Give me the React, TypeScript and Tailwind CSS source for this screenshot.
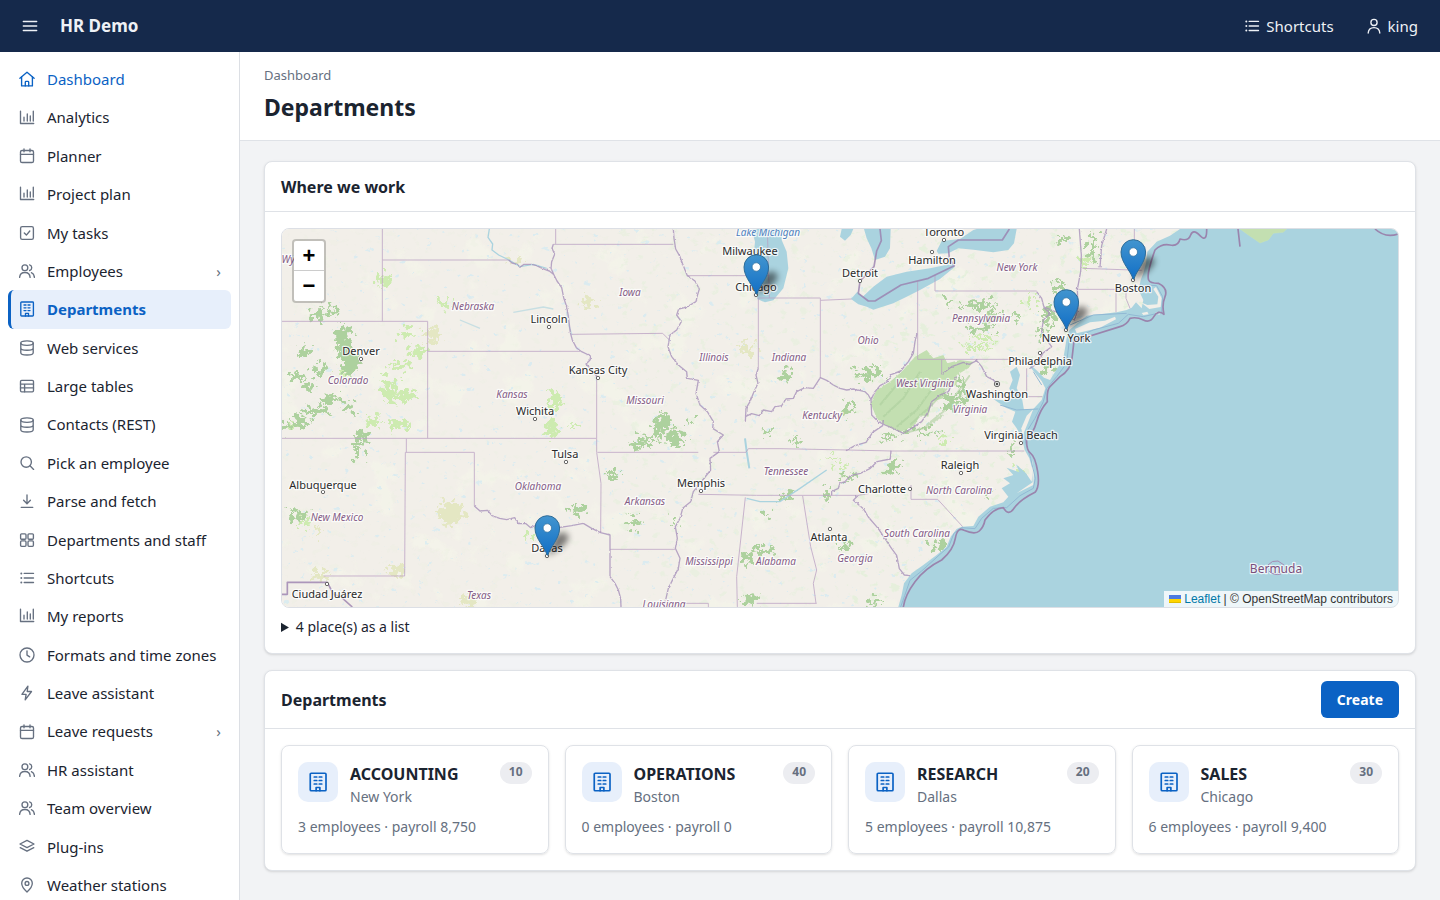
import { useState, type ReactNode } from "react";

/* ---------- icons ---------- */

const glyphs: Record<string, ReactNode> = {
  home: (
    <>
      <path d="M.9 7.3 8 1.2l7.1 6.1" />
      <path d="M2.6 6v8.9h10.8V6" />
      <path d="M6.3 14.9v-3.7c0-.5.3-.8.8-.8h1.8c.5 0 .8.3.8.8v3.7" />
    </>
  ),
  chart: <path d="M1.5 1.2v12.3h13.2M5 7.2v3.9M8.3 4v7.1M11.3 6v5.1M14.3 1.2v9.9" />,
  calendar: (
    <>
      <rect x="1.5" y="2.5" width="13" height="12" rx="1.6" />
      <path d="M1.5 6.3h13M5 1v2.8M11 1v2.8" />
    </>
  ),
  check: (
    <>
      <rect x="1.6" y="1.6" width="12.8" height="12.8" rx="1.6" />
      <path d="m5.3 8 2.1 2.1 3.4-4.1" />
    </>
  ),
  users: (
    <>
      <circle cx="5.9" cy="4.7" r="2.9" />
      <path d="M.6 14.4c.2-3 2.3-4.9 5.3-4.9s5 1.9 5.2 4.9M10.6 1.9a2.9 2.9 0 0 1 0 5.6M12.4 9.7c1.8.8 2.9 2.5 3 4.7" />
    </>
  ),
  building: (
    <>
      <rect x="1.8" y="1" width="12.6" height="14" rx=".8" />
      <path d="M5 4h2M9 4h2M5 6.8h2M9 6.8h2M5 9.6h2M9 9.6h2M6.5 15v-2.6h3V15" />
    </>
  ),
  database: (
    <>
      <ellipse cx="8" cy="3.1" rx="6.2" ry="2.2" />
      <path d="M1.8 3.1v9.6c0 1.3 2.8 2.3 6.2 2.3s6.2-1 6.2-2.3V3.1M1.800 7.900c0 1.300 2.800 2.300 6.200 2.300s6.200-1 6.200-2.300" />
    </>
  ),
  table: (
    <>
      <rect x="1.5" y="2.4" width="13" height="11.4" rx="1.2" />
      <path d="M1.5 6.1h13M1.5 9.9h13M5.6 6.1v7.7" />
    </>
  ),
  search: (
    <>
      <circle cx="7.2" cy="7" r="5.2" />
      <path d="m11 10.8 3.6 3.6" />
    </>
  ),
  download: <path d="M8 2v8.6M4.6 7.3 8 10.7l3.4-3.4M2.2 14.3h11.6" />,
  grid: (
    <>
      <rect x="1.6" y="1.8" width="5.4" height="5.4" rx="1" />
      <rect x="9" y="1.8" width="5.4" height="5.4" rx="1" />
      <rect x="1.6" y="8.9" width="5.4" height="5.4" rx="1" />
      <rect x="9" y="8.9" width="5.4" height="5.4" rx="1" />
    </>
  ),
  list: (
    <>
      <path d="M5.2 3.4h9.3M5.2 8h9.3M5.2 12.5h9.3" />
      <g fill="currentColor" stroke="none">
        <circle cx="2.3" cy="3.4" r="1" />
        <circle cx="2.3" cy="8" r="1" />
        <circle cx="2.3" cy="12.5" r="1" />
      </g>
    </>
  ),
  clock: (
    <>
      <circle cx="8" cy="8" r="7" />
      <path d="M8 3.8v4.3l2.7 1.8" />
    </>
  ),
  bolt: <path d="M8.9 1.2 2.9 9.3h4.2l-.9 5.5 6.3-8.3H8.2z" />,
  layers: (
    <>
      <path d="M8 1.4 15 5 8 8.6 1 5z" />
      <path d="m1.2 8.7 6.8 3.5 6.8-3.5" />
    </>
  ),
  pin: (
    <>
      <path d="M8 15s5.3-4.7 5.3-8.7a5.3 5.3 0 0 0-10.6 0C2.7 10.3 8 15 8 15z" />
      <circle cx="8" cy="6.4" r="1.9" />
    </>
  ),
  user: (
    <>
      <circle cx="8" cy="4.4" r="3.1" />
      <path d="M2.2 15c.2-3.3 2.5-5.4 5.800-5.400s5.600 2.100 5.800 5.400" />
    </>
  ),
  menu: <path d="M1.3 3.5h13.4M1.3 8h13.400M1.300 12.500h13.400" />,
};

function Icon({ name, className = "size-4" }: { name: string; className?: string }) {
  return (
    <svg
      viewBox="0 0 16 16"
      className={"shrink-0 " + className}
      fill="none"
      stroke="currentColor"
      strokeWidth="1.35"
      strokeLinecap="round"
      strokeLinejoin="round"
      aria-hidden="true"
    >
      {glyphs[name]}
    </svg>
  );
}

/* ---------- data ---------- */

const navItems: { label: string; icon: string; more?: boolean }[] = [
  { label: "Dashboard", icon: "home" },
  { label: "Analytics", icon: "chart" },
  { label: "Planner", icon: "calendar" },
  { label: "Project plan", icon: "chart" },
  { label: "My tasks", icon: "check" },
  { label: "Employees", icon: "users", more: true },
  { label: "Departments", icon: "building" },
  { label: "Web services", icon: "database" },
  { label: "Large tables", icon: "table" },
  { label: "Contacts (REST)", icon: "database" },
  { label: "Pick an employee", icon: "search" },
  { label: "Parse and fetch", icon: "download" },
  { label: "Departments and staff", icon: "grid" },
  { label: "Shortcuts", icon: "list" },
  { label: "My reports", icon: "chart" },
  { label: "Formats and time zones", icon: "clock" },
  { label: "Leave assistant", icon: "bolt" },
  { label: "Leave requests", icon: "calendar", more: true },
  { label: "HR assistant", icon: "users" },
  { label: "Team overview", icon: "users" },
  { label: "Plug-ins", icon: "layers" },
  { label: "Weather stations", icon: "pin" },
];

const departments = [
  { no: 10, name: "ACCOUNTING", city: "New York", info: "3 employees · payroll 8,750" },
  { no: 40, name: "OPERATIONS", city: "Boston", info: "0 employees · payroll 0" },
  { no: 20, name: "RESEARCH", city: "Dallas", info: "5 employees · payroll 10,875" },
  { no: 30, name: "SALES", city: "Chicago", info: "6 employees · payroll 9,400" },
];

/* ---------- map ---------- */

type Label = [string, number, number];
type Blob = [number, number, number, number];

const cities: Label[] = [
  ["Lincoln", 549, 323],
  ["Denver", 361, 355],
  ["Kansas City", 598, 374],
  ["Wichita", 535, 415],
  ["Tulsa", 565, 458],
  ["Albuquerque", 323, 489],
  ["Ciudad Juárez", 327, 598],
  ["Dallas", 547, 552],
  ["Milwaukee", 750, 255],
  ["Chicago", 756, 291],
  ["Detroit", 860, 277],
  ["Toronto", 944, 236],
  ["Hamilton", 932, 264],
  ["Memphis", 701, 487],
  ["Charlotte", 882, 493],
  ["Raleigh", 960, 469],
  ["Atlanta", 829, 541],
  ["Washington", 997, 398],
  ["Virginia Beach", 1021, 439],
  ["Philadelphia", 1040, 365],
  ["New York", 1066, 342],
  ["Boston", 1133, 292],
];

const states: Label[] = [
  ["Wy", 288, 263],
  ["Nebraska", 473, 310],
  ["Iowa", 630, 296],
  ["Colorado", 348, 384],
  ["Kansas", 512, 398],
  ["Missouri", 645, 404],
  ["New Mexico", 337, 521],
  ["Oklahoma", 538, 490],
  ["Arkansas", 645, 505],
  ["Texas", 479, 599],
  ["Louisiana", 664, 608],
  ["Illinois", 714, 361],
  ["Indiana", 789, 361],
  ["Ohio", 868, 344],
  ["Kentucky", 822, 419],
  ["Tennessee", 786, 475],
  ["Mississippi", 709, 565],
  ["Alabama", 776, 565],
  ["Georgia", 855, 562],
  ["South Carolina", 917, 537],
  ["North Carolina", 959, 494],
  ["Virginia", 970, 413],
  ["West Virginia", 925, 387],
  ["Pennsylvania", 981, 322],
  ["New York", 1017, 271],
];

const dots: [number, number][] = [
  [549, 327], [361, 359], [598, 378], [535, 419], [566, 462], [323, 492], [327, 584],
  [547, 556], [756, 295], [860, 281], [944, 240], [932, 252], [701, 491], [910, 489],
  [961, 473], [830, 529], [1021, 443], [1040, 353], [1066, 330], [1133, 280],
];

const forests: Blob[] = [
  [330, 310, 5, 5], [317, 316, 8, 4], [343, 340, 8, 16], [350, 362, 9, 12], [305, 352, 8, 4],
  [321, 370, 6, 6], [298, 377, 9, 3], [309, 388, 5, 4], [332, 400, 11, 4], [315, 410, 14, 4],
  [300, 422, 11, 5], [350, 408, 3, 7], [283, 426, 4, 5], [362, 438, 7, 6], [358, 452, 3, 7],
  [300, 515, 9, 5], [578, 509, 8, 5], [613, 475, 6, 3], [634, 522, 7, 4], [664, 420, 8, 6],
  [675, 438, 9, 9], [648, 440, 12, 3], [636, 445, 8, 3], [660, 428, 5, 8], [786, 377, 4, 7],
  [795, 440, 4, 3], [870, 374, 14, 5], [848, 408, 4, 8], [849, 478, 9, 3], [893, 466, 7, 5],
  [827, 494, 3, 4], [787, 498, 7, 5], [763, 513, 4, 3], [762, 550, 12, 4], [748, 558, 5, 7],
  [751, 600, 6, 7], [875, 602, 6, 4], [937, 544, 7, 5], [845, 545, 4, 4], [948, 302, 4, 4],
  [978, 305, 16, 4], [980, 328, 13, 4], [992, 316, 8, 6], [1050, 315, 6, 9], [1042, 332, 4, 7],
  [1058, 287, 8, 5], [1062, 240, 4, 4], [1093, 248, 4, 13], [1048, 367, 6, 6], [962, 390, 4, 16],
  [950, 403, 6, 10], [890, 437, 9, 3], [925, 432, 12, 2], [905, 425, 8, 5], [1011, 449, 2, 5],
  [1015, 320, 2, 5], [676, 519, 3, 3], [988, 496, 3, 2], [767, 432, 4, 2], [690, 423, 3, 3],
];

const meadows: Blob[] = [
  [384, 281, 7, 6], [447, 304, 7, 3], [408, 334, 10, 4], [418, 352, 8, 6], [400, 365, 12, 3],
  [388, 388, 7, 12], [404, 396, 11, 5], [375, 420, 6, 4], [555, 400, 5, 10], [551, 428, 5, 10],
  [400, 425, 12, 5], [345, 372, 8, 4], [303, 523, 7, 3], [372, 424, 6, 2], [533, 536, 4, 4],
  [573, 426, 4, 2], [295, 425, 7, 3], [944, 440, 4, 5], [833, 458, 9, 2], [842, 466, 7, 2],
  [1030, 300, 4, 8], [1085, 262, 5, 6], [975, 347, 14, 2], [985, 338, 14, 2], [1020, 472, 5, 5],
];

const fields: Blob[] = [
  [451, 513, 14, 11], [397, 571, 7, 6], [470, 599, 8, 7], [318, 531, 3, 6], [748, 350, 9, 6],
  [515, 261, 7, 4], [320, 574, 8, 4], [588, 302, 8, 4], [432, 335, 10, 6],
];

const pins: [number, number][] = [
  [756, 295],
  [1133, 280],
  [1066, 330],
  [547, 556],
];

function Blobs({ items, fill }: { items: Blob[]; fill: string }) {
  return (
    <g fill={fill} filter="url(#rough)">
      {items.map(([x, y, rx, ry], i) => (
        <ellipse key={i} cx={x} cy={y} rx={rx} ry={ry} />
      ))}
    </g>
  );
}

function MapDrawing() {
  return (
    <svg
      viewBox="282 229 1116 378"
      preserveAspectRatio="xMidYMid slice"
      className="block size-full"
      role="img"
      aria-label="Map of places"
    >
      <defs>
        <filter id="rough" x="-5%" y="-5%" width="110%" height="110%">
          <feTurbulence type="fractalNoise" baseFrequency="0.17" numOctaves="4" seed="4" />
          <feDisplacementMap in="SourceGraphic" scale="24" xChannelSelector="R" yChannelSelector="G" />
        </filter>
        <filter id="wobble" x="-5%" y="-5%" width="110%" height="110%">
          <feTurbulence type="fractalNoise" baseFrequency="0.13" numOctaves="1" seed="9" />
          <feDisplacementMap in="SourceGraphic" scale="8" xChannelSelector="R" yChannelSelector="G" />
        </filter>
        <filter id="fleckGreen" x="0" y="0" width="100%" height="100%">
          <feTurbulence type="fractalNoise" baseFrequency="0.1 0.13" numOctaves="5" seed="12" />
          <feColorMatrix values="0 0 0 0 .76  0 0 0 0 .87  0 0 0 0 .69  9 0 0 0 -5.6" />
        </filter>
        <filter id="fleckPale" x="0" y="0" width="100%" height="100%">
          <feTurbulence type="fractalNoise" baseFrequency="0.03" numOctaves="5" seed="31" />
          <feColorMatrix values="0 0 0 0 .92  0 0 0 0 .94  0 0 0 0 .82  0 8 0 0 -4.8" />
        </filter>
        <filter id="fleckBlue" x="0" y="0" width="100%" height="100%">
          <feTurbulence type="fractalNoise" baseFrequency="0.12 0.15" numOctaves="4" seed="7" />
          <feColorMatrix values="0 0 0 0 .67  0 0 0 0 .83  0 0 0 0 .89  0 0 14 0 -10.2" />
        </filter>
        <filter id="soft" x="-50%" y="-50%" width="200%" height="200%">
          <feGaussianBlur stdDeviation="3" />
        </filter>
        <linearGradient id="pinFill" x1="0" y1="0" x2="0" y2="1">
          <stop offset="0" stopColor="#4295cf" />
          <stop offset="1" stopColor="#126fc6" />
        </linearGradient>
      </defs>

      <rect x="282" y="229" width="1116" height="378" fill="#f2efe9" />
      <rect x="282" y="229" width="900" height="378" filter="url(#fleckPale)" opacity=".45" />
      <rect x="282" y="229" width="330" height="378" filter="url(#fleckGreen)" opacity=".15" />
      <rect x="612" y="229" width="240" height="378" filter="url(#fleckGreen)" opacity=".45" />
      <rect x="852" y="229" width="330" height="378" filter="url(#fleckGreen)" opacity=".75" />
      <rect x="282" y="229" width="900" height="378" filter="url(#fleckBlue)" opacity=".8" />
      <Blobs items={fields} fill="#e4e7c3" />
      <Blobs items={meadows} fill="#cdebb0" />
      <Blobs items={forests} fill="#add19e" />

      <g transform="translate(280 225) scale(.333333)">
        {/* Appalachian woodland */}
        <g filter="url(#wobble)">
          <path
            transform="translate(1740)"
            fill="#c3dfb1"
            d="M165 395 200 375 220 400 250 390 262 415 300 405 340 410 325 430 290 450 290 480 255 490 250 520 215 530 205 575 180 570 165 600 120 622 75 600 50 580 32 535 50 495 90 470 125 440z"
          />
          <g transform="translate(1740)" fill="none" stroke="#abcf9c" strokeWidth="6" opacity=".6">
            <path d="M70 575 130 520 180 440M110 605 170 555 225 480M60 540 110 480M150 600 215 540 280 470M330 450 280 520 250 560 200 600M130 625 190 610 250 570" />
          </g>
        </g>

        {/* lakes */}
        <g transform="translate(1080)" fill="#aad3df">
          <path d="M335 12 345 50 340 100 350 180 352 222 375 232 400 226 430 190 445 130 440 80 425 45 428 12z" />
          <path d="M605 12 600 35 615 47 632 30 640 12zM672 12 680 40 694 70 705 105 735 95 750 70 752 12z" />
          <path d="M633 222 652 200 668 215 700 185 740 155 800 140 870 130 942 115 944 126 900 162 840 195 800 215 760 235 700 254 680 245 655 238z" />
          <path d="M890 78 905 48 960 42 1000 15 1010 12H1130L1122 55 1105 75 1060 82 1000 74 955 70 925 85 895 86z" />
        </g>

        {/* ocean */}
        <g transform="translate(1740)">
          <path
            fill="#aad3df"
            d="M115 1146 125 1110 132 1075 155 1045 190 1020 230 990 260 965 272 935 290 912 305 905 340 903 355 875 390 845 430 832 445 815 425 790 450 775 430 760 460 750 440 728 478 742 468 718 498 745 515 770 518 735 508 700 494 675 486 640 470 610 456 590 466 560 438 548 400 522 440 528 458 520 448 490 458 465 450 440 470 425 480 450 470 490 486 520 492 555 520 552 545 525 556 490 545 468 510 425 515 422 532 438 552 458 570 465 592 430 610 400 615 370 620 340 628 315 680 272 770 262 800 255 815 248 828 232 845 250 850 225 836 195 842 165 850 145 858 115 862 80 890 50 930 32 960 12H1614V1146z"
          />
          <g fill="#f2efe9">
            <path d="M484 610 500 572 520 552 505 590 488 632z" />
            <path d="M645 312 690 292 735 287 765 275 768 283 720 308 650 325z" />
            <path d="M842 232 862 240 892 238 895 215 880 192 888 186 905 220 902 246 868 252zM845 264 862 260 866 268 850 270zM886 262 900 262 898 270z" />
            <path d="M515 700 522 740 520 780 470 805 518 772z" />
          </g>
          <path
            fill="#c3dfb1"
            stroke="#cdebb0"
            d="M1140 12 1165 30 1200 54 1225 45 1240 25 1270 22 1280 12z"
          />
          <g fill="none" stroke="#92b9d4" strokeWidth="3">
            <path d="M122 1146 134 1112 150 1066 185 1038 240 988 266 966 282 925 305 908 345 911 365 880 400 850 440 848 480 812 520 790 526 760 512 700 496 650 500 620 525 580 550 530 560 490 590 455 620 415 628 345 700 315 775 295 805 268 850 275 905 262 908 215 890 182 855 180" />
            <path d="M520 440 545 480M420 540 470 555 535 552M630 300 700 270 800 265" />
          </g>
          <g fill="none" stroke="#9a84ad" strokeWidth="5" strokeLinejoin="round">
            <path d="M130 1146Q135 1110 165 1070T245 1005Q280 975 286 940T312 916Q345 930 358 918T375 885Q400 850 430 848 445 875 462 850T525 802Q540 785 533 740T512 685 500 640Q520 625 530 590T562 530Q560 495 570 485T600 455Q632 435 636 400T642 348Q700 330 780 305 800 300 810 280 830 275 850 285T882 274 912 268Q905 240 915 215T895 175Q870 175 866 165T868 130 885 75Q905 55 930 60T960 42Q985 50 992 30T1020 32 1040 12" />
            <path d="M1134 12 1140 65M1545 12Q1575 40 1614 27" />
          </g>
        </g>

        {/* rivers */}
        <g fill="none" stroke="#aad3df" strokeWidth="4">
          <path d="M628 12 624 37 638 57 636 75 656 90 681 102 720 125 760 118 800 130" />
          <path d="M700 262 790 246 820 252M540 285 600 310M860 260 866 300 876 330" opacity=".6" />
          <path d="M1395 640 1400 680 1408 730" strokeWidth="6" />
          <path d="M1400 820 1440 830 1500 830 1560 790 1640 735" />
        </g>

        {/* state and country borders */}
        <g fill="none" stroke="#b99fc2" strokeWidth="3" opacity=".75" strokeLinejoin="round">
          <path d="M307 12V289M5 289H443V640M443 379H900M827 12V57M820 58H1180M875 328 1148 325 1166 343M307 105H686" />
          <path d="M5 640H950M379 640V682M376 682H583V843M376 682 374 1053H131M950 640V445M950 640V682L963 775 962 923M952 682H1255M990 973H1185" />
          <path d="M1222 152H1468M1435 219H1621V458M1621 226 1715 222M1435 219V430M1462 12 1468 219" />
          <path d="M1913 170V403H2240M1985 403V448M1965 150V198H2270" />
          <path d="M1300 682H1398L1405 671 1500 671 1700 675 1835 678H2233M1255 808 1430 811H1735L1765 806M1396 817 1370 1055 1372 1146M1568 813 1592 965 1610 1035 1600 1075 1608 1135M1430 1135H1610M1210 1135H1285V1146" />
          <path d="M1893 780V823H1973L2048 905M2240 430V515H2287M2408 130 2585 136M2395 193H2508V262M2508 194H2538V220L2550 250M2563 12V70" />
        </g>
        <g
          filter="url(#wobble)"
          fill="none"
          stroke="#a892bb"
          strokeWidth="4"
          opacity=".8"
          strokeLinejoin="round"
        >
          <path d="M686 105 696 114 712 118 720 127 732 118 755 118 770 122 782 128 796 134 808 138 823 150M820 58 816 70 824 88 815 110 813 130 822 150 831 168 845 188 851 218 860 245 865 273 871 323 877 345 889 368 905 380 932 393 930 405 918 417 938 438 952 457" />
          <path d="M583 843 600 858 623 856 636 872 659 880 680 884 704 878 715 896 738 896 752 908 766 902 790 913 815 912 840 907 875 902 910 895 935 910 962 923 990 930V1055L1005 1075 1015 1095 1022 1120 1023 1146" />
          <path d="M1180 12 1182 40 1187 72 1200 95 1208 117 1222 152 1245 168 1258 192 1252 212 1248 230 1220 246 1196 252 1190 270 1204 290 1190 315 1170 330 1164 365 1175 395 1195 420 1220 440 1222 460 1255 466 1248 505 1260 540 1282 560 1300 590 1298 610 1330 630 1312 650 1318 680 1290 700 1292 735 1268 765 1240 800 1232 830 1208 850 1200 880 1186 905 1192 940 1186 970 1200 1000 1195 1030 1180 1060 1165 1090 1158 1120 1150 1146" />
          <path d="M1435 430 1428 450 1434 475 1420 505 1410 530 1398 550 1396 590M1396 575 1415 566 1438 572 1450 555 1475 560 1485 545 1505 542 1518 522 1540 520 1550 500 1575 488 1600 490 1621 458 1640 466 1660 480 1680 490 1700 495 1720 492 1755 500 1765 510 1773 524 1785 500 1800 482 1822 470 1835 448 1862 438 1885 410 1900 385 1905 350 1911 325" />
          <path d="M1985 448 2015 425 2050 412 2068 418 2090 407 2105 425 2120 455 2140 465 2150 475M1773 524 1775 570 1795 590 1815 600 1840 610 1870 625 1895 610 1925 590 1945 560 1955 530 1980 510 2005 500 2020 470 2030 455" />
          <path d="M1698 677 1725 662 1758 652 1778 622 1808 602 1810 585M1833 677 1831 702 1791 710 1771 730 1741 745 1711 752 1695 770 1680 775 1675 790 1655 800V811M1735 811 1720 826 1750 851 1765 876 1795 911 1815 941 1835 971 1850 991 1858 1031 1873 1050 1890 1052" />
          <path d="M2270 200 2285 220 2293 250 2310 265 2290 285 2285 320 2300 345 2315 365 2290 383 2280 400 2265 420 2250 430M2398 12 2404 90 2402 140 2392 193 2394 250 2384 285 2290 245M2480 12 2465 62 2460 127" />
        </g>
        <g fill="none" stroke="#9a7fae" strokeWidth="5" strokeLinejoin="round" opacity=".8">
          <path d="M5 1108H22V1072H142L160 1107 182 1115 217 1146" />
          <path d="M1800 12 1804 47 1790 78 1782 125 1740 168 1735 205 1765 228H1785L1863 180 1945 160 2023 122 2008 100 2005 65 2035 45H2167L2188 12" />
        </g>
      </g>

      {/* labels */}
      <g fill="#fff" stroke="#444" strokeWidth=".8">
        {dots.map(([x, y], i) => (
          <circle key={i} cx={x} cy={y} r="1.7" />
        ))}
        <circle cx="997" cy="384" r="2.7" />
        <circle cx="997" cy="384" r="1" fill="#333" />
      </g>
      <g
        textAnchor="middle"
        className="font-['Noto_Sans',sans-serif]"
        stroke="#ffffff"
        strokeOpacity=".75"
        strokeWidth="2.5"
        strokeLinejoin="round"
        paintOrder="stroke"
      >
        <g fontSize="10" fontStyle="italic" fill="#845b86">
          {states.map(([name, x, y], i) => (
            <text key={i} x={x} y={y}>
              {name}
            </text>
          ))}
          <text x="768" y="236" fill="#4f80bd">
            Lake Michigan
          </text>
        </g>
        <g fontSize="11" fill="#2a2a2a">
          {cities.map(([name, x, y], i) => (
            <text key={i} x={x} y={y}>
              {name}
            </text>
          ))}
        </g>
        <text x="1276" y="573" fontSize="12" fill="#7a4f7c">
          Bermuda
        </text>
      </g>
      <path d="M1268 565q4-5 10-4l6 4M1269 571q5 5 12 3" fill="none" stroke="#a58bb4" />

      {/* pins */}
      {pins.map(([x, y]) => (
        <g key={x} transform={`translate(${x} ${y})`}>
          <path d="M0 0 8-20Q15-26 20-22T14-8z" fill="#000" opacity=".5" filter="url(#soft)" />
          <path
            d="M0-1C-2-9-12-17-12-28a12.3 12.3 0 0 1 24.6 0C12.6-17 3-9 1-1z"
            fill="url(#pinFill)"
            stroke="#2e6c97"
          />
          <circle cx=".3" cy="-28" r="4.2" fill="#fff" stroke="#2e6c97" strokeWidth=".7" />
        </g>
      ))}
    </svg>
  );
}

function PlacesMap() {
  return (
    <div className="relative h-[380px] overflow-hidden rounded-lg border border-[#dcdfe5]">
      <MapDrawing />
      <div className="absolute top-2.5 left-2.5 flex flex-col rounded-sm border-2 border-black/20 bg-white bg-clip-padding font-['Liberation_Sans',sans-serif] text-[22px] leading-[30px] font-bold text-black">
        <button type="button" aria-label="Zoom in" className="size-[30px] border-b border-[#ccc]">
          +
        </button>
        <button type="button" aria-label="Zoom out" className="size-[30px]">
          −
        </button>
      </div>
      <div className="absolute right-0 bottom-0 flex items-center bg-white/80 px-[5px] font-['Liberation_Sans',sans-serif] text-[12px] leading-4 text-[#333]">
        <a href="#leaflet" className="flex items-center gap-[3px] text-[#0078a8]">
          <svg viewBox="0 0 12 8" className="h-2 w-3" aria-hidden="true">
            <path fill="#4c7be1" d="M0 0h12v4H0z" />
            <path fill="#ffd500" d="M0 4h12v3H0z" />
            <path fill="#e0bc00" d="M0 7h12v1H0z" />
          </svg>
          Leaflet
        </a>
        <span className="whitespace-pre"> | © OpenStreetMap contributors</span>
      </div>
    </div>
  );
}

/* ---------- page ---------- */

function Panel({ title, action, children }: { title: string; action?: ReactNode; children: ReactNode }) {
  return (
    <section className="rounded-lg border border-[#dfe2e7] bg-white shadow-sm">
      <div className="flex min-h-[50px] items-center justify-between border-b border-[#dfe2e7] px-4 py-2.5">
        <h2 className="text-base leading-6 font-bold">{title}</h2>
        {action}
      </div>
      <div className="p-4">{children}</div>
    </section>
  );
}

function PlaceList() {
  const [open, setOpen] = useState(false);
  return (
    <details
      className="mt-2 text-sm leading-[21px]"
      onToggle={(event) => setOpen(event.currentTarget.open)}
    >
      <summary className="cursor-pointer">4 place(s) as a list</summary>
      {open && (
        <ul className="mt-2 pl-4">
          {departments.map((d) => (
            <li key={d.no}>{d.city}</li>
          ))}
        </ul>
      )}
    </details>
  );
}

function Sidebar() {
  return (
    <nav
      aria-label="Main"
      className="w-60 shrink-0 overflow-y-auto border-r border-[#dcdfe4] bg-white p-2 [scrollbar-width:none]"
    >
      <ul>
        {navItems.map((item) => {
          const active = item.label === "Departments";
          const tone = active
            ? "border-[#0b62c4] bg-[#e7effb] font-bold text-[#0b62c4]"
            : item.label === "Dashboard"
              ? "border-transparent text-[#0b62c4]"
              : "border-transparent";
          const iconTone = active || item.label === "Dashboard" ? "size-4" : "size-4 text-[#667080]";
          return (
            <li key={item.label}>
              <a
                href={"#" + item.icon}
                aria-current={active ? "page" : undefined}
                className={
                  "flex items-center gap-3 rounded-md border-l-3 py-[7px] pr-2.5 pl-2 text-[15px] leading-relaxed whitespace-nowrap " +
                  tone
                }
              >
                <Icon name={item.icon} className={iconTone} />
                <span className="flex-1">{item.label}</span>
                {item.more && <span className="text-[#667080]">›</span>}
              </a>
            </li>
          );
        })}
      </ul>
    </nav>
  );
}

export default function App() {
  return (
    <div className="flex h-screen flex-col font-['Noto_Sans',sans-serif] text-[#1b2430]">
      <header className="flex h-13 shrink-0 items-center bg-[#15294b] px-[22px] text-[15px] text-[#eef1f6]">
        <button type="button" aria-label="Toggle menu">
          <Icon name="menu" />
        </button>
        <span className="ml-[22px] text-[17px] font-bold">HR Demo</span>
        <div className="ml-auto flex items-center gap-8">
          <button type="button" className="flex items-center gap-1.5">
            <Icon name="list" />
            Shortcuts
          </button>
          <button type="button" className="flex items-center gap-1.5">
            <Icon name="user" />
            king
          </button>
        </div>
      </header>

      <div className="flex min-h-0 flex-1">
        <Sidebar />
        <main className="min-w-0 flex-1 overflow-y-auto bg-[#f2f3f5]">
          <div className="border-b border-[#dfe2e7] bg-white px-6 pt-[11px] pb-[17px]">
            <a href="#dashboard" className="block text-[13px] leading-6 text-[#667080]">
              Dashboard
            </a>
            <h1 className="mt-1 text-[23px] leading-8 font-bold">Departments</h1>
          </div>

          <div className="flex flex-col gap-4 px-6 pt-5 pb-6">
            <Panel title="Where we work">
              <PlacesMap />
              <PlaceList />
            </Panel>

            <Panel
              title="Departments"
              action={
                <button
                  type="button"
                  className="rounded-md bg-[#0b62c4] px-4 py-2 text-sm leading-[21px] font-bold text-white"
                >
                  Create
                </button>
              }
            >
              <div className="grid grid-cols-4 gap-4">
                {departments.map((d) => (
                  <article key={d.no} className="rounded-lg border border-[#dfe2e7] p-4 shadow-sm">
                    <div className="flex items-start gap-3">
                      <div className="flex size-10 shrink-0 items-center justify-center rounded-[10px] bg-[#e7effb] text-[#0b62c4]">
                        <Icon name="building" className="size-5" />
                      </div>
                      <div className="min-w-0 flex-1">
                        <h3 className="text-base leading-6 font-bold">{d.name}</h3>
                        <p className="text-sm leading-[22px] text-[#667080]">{d.city}</p>
                      </div>
                      <span className="rounded-full bg-[#ecedf1] px-[9px] pt-px pb-[3px] text-xs leading-[18px] font-bold text-[#667080]">
                        {d.no}
                      </span>
                    </div>
                    <p className="mt-2 text-sm leading-[21px] text-[#667080]">{d.info}</p>
                  </article>
                ))}
              </div>
            </Panel>
          </div>
        </main>
      </div>
    </div>
  );
}
